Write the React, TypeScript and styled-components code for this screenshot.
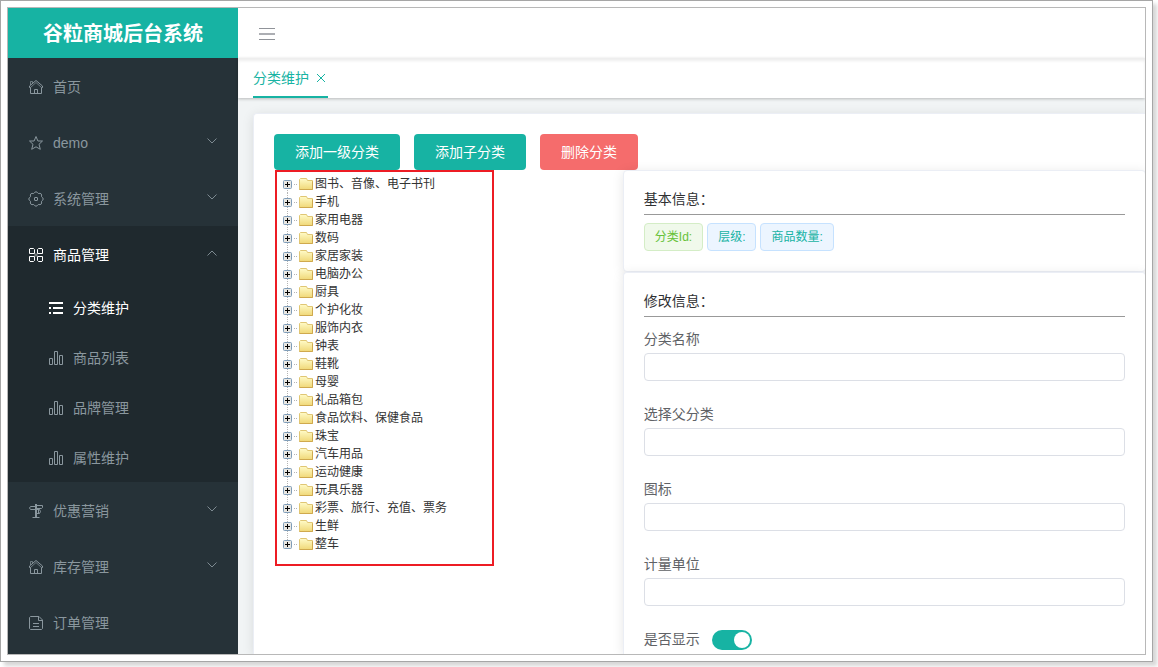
import React, { useState } from "react";
import styled, { createGlobalStyle, css } from "styled-components";

const brand = "#17b3a3";

const GlobalStyle = createGlobalStyle`
  * { box-sizing: border-box; }
  body {
    margin: 0;
    background: #fff;
    color: #303133;
    font-family: "Liberation Sans", "Noto Sans CJK SC", sans-serif;
    font-size: 14px;
    line-height: 20px;
  }
  button, input { font: inherit; }
  ul { list-style: none; margin: 0; padding: 0; }
`;

const Frame = styled.div`
  display: flex;
  min-height: calc(100vh - 5px);
  margin: 0 5px 5px 0;
  padding: 6px;
  border: 1px solid #a6a6a6;
  box-shadow: 4px 4px 4px rgba(0, 0, 0, 0.16);
`;

const Shell = styled.div`
  flex: 1;
  display: flex;
  min-width: 0;
  border: 1px solid #b8b8b8;
  overflow: hidden;
`;

const Sidebar = styled.aside`
  flex: 0 0 230px;
  background: #263238;
`;

const Brand = styled.h1`
  margin: 0;
  height: 50px;
  line-height: 52px;
  background: ${brand};
  color: #fff;
  font-size: 20px;
  font-weight: 700;
  text-align: center;
`;

const MenuGroup = styled.li<{ $open?: boolean }>`
  background: ${(p) => (p.$open ? "#1f292e" : "transparent")};
`;

const menuEntry = css<{ $active?: boolean }>`
  display: flex;
  align-items: center;
  width: 100%;
  border: 0;
  background: none;
  color: ${(p) => (p.$active ? "#fff" : "#8a979e")};
  text-align: left;
  text-decoration: none;
  cursor: pointer;
`;

const MenuButton = styled.button<{ $active?: boolean }>`
  ${menuEntry}
  height: 56px;
  padding: 2px 20px 0;
  gap: 9px;
`;

const SubLink = styled.a<{ $active?: boolean }>`
  ${menuEntry}
  height: 50px;
  padding: 2px 20px 0 40px;
  gap: 9px;
`;

const MenuLabel = styled.span`
  flex: 1;
`;

const Icon = styled.svg`
  flex: none;
  width: 16px;
  height: 16px;
  fill: none;
  stroke: currentColor;
  stroke-width: 1;
`;

const Arrow = styled.svg`
  flex: none;
  width: 12px;
  height: 10px;
  margin-bottom: 5px;
  fill: none;
  stroke: #7d8a91;
`;

const Main = styled.div`
  flex: 1;
  min-width: 0;
  display: flex;
  flex-direction: column;
  background: #f1f4f5;
`;

const Navbar = styled.header`
  display: flex;
  align-items: center;
  height: 50px;
  padding: 2px 20px 0;
  background: #fff;
`;

const IconButton = styled.button`
  display: flex;
  padding: 0;
  border: 0;
  background: none;
  color: #909399;
  cursor: pointer;
`;

const TabBar = styled.div`
  display: flex;
  height: 40px;
  padding: 0 15px;
  background: #fff;
  box-shadow: 0 1px 3px rgba(0, 0, 0, 0.24), inset 0 3px 3px rgba(0, 0, 0, 0.07);
`;

const Tab = styled.div`
  display: flex;
  align-items: center;
  gap: 5px;
  padding-top: 2px;
  border-bottom: 2px solid ${brand};
  color: ${brand};
`;

const TabLink = styled.a`
  color: inherit;
  text-decoration: none;
`;

const CloseButton = styled(IconButton)`
  color: ${brand};
`;

const Card = styled.section`
  border: 1px solid #ebeef5;
  border-radius: 4px;
  background: #fff;
  box-shadow: 0 2px 12px rgba(0, 0, 0, 0.1);
`;

const PageCard = styled(Card)`
  flex: 1;
  margin: 15px -1px 0 15px;
  padding: 20px 0 0 20px;
  border-width: 1px 0 0 1px;
  border-radius: 4px 0 0 0;
`;

const Toolbar = styled.div`
  display: flex;
  gap: 14px;
`;

const Button = styled.button<{ $danger?: boolean }>`
  height: 36px;
  padding: 0 21px;
  border: 0;
  border-radius: 4px;
  background: ${(p) => (p.$danger ? "#f56c6c" : brand)};
  color: #fff;
  cursor: pointer;
`;

const Columns = styled.div`
  display: grid;
  grid-template-columns: 2fr 3fr;
  align-items: start;
`;

const Tree = styled.ul`
  width: 219px;
  margin-left: 1px;
  padding: 3px 0 11px 5px;
  border: 2px solid #ed1c24;
  font-size: 12px;
`;

const TreeRow = styled.li`
  display: flex;
  align-items: center;
  height: 18px;
`;

const TreeToggle = styled.button`
  display: flex;
  padding: 0;
  border: 0;
  background: none;
`;

const TreeLink = styled.a`
  display: flex;
  align-items: center;
  line-height: 18px;
  color: #333;
  text-decoration: none;
`;

const InfoCard = styled(Card)`
  padding: 20px;
`;

const CardTitle = styled.h2`
  margin: 0;
  padding-bottom: 7px;
  border-bottom: 1px solid #999;
  font-size: 14px;
  font-weight: 400;
  line-height: 16px;
`;

const Tags = styled.div`
  display: flex;
  gap: 4px;
  margin-top: 8px;
`;

const Tag = styled.span<{ $success?: boolean }>`
  height: 28px;
  padding: 0 10px;
  border: 1px solid ${(p) => (p.$success ? "#d4edc6" : "#c6e2ff")};
  border-radius: 4px;
  background: ${(p) => (p.$success ? "#f0f9eb" : "#ecf5ff")};
  color: ${(p) => (p.$success ? "#67c23a" : brand)};
  font-size: 12px;
  line-height: 26px;
`;

const FormCard = styled(InfoCard)`
  padding-bottom: 4px;
  border-bottom: 0;
  border-radius: 4px 4px 0 0;
`;

const Form = styled.form`
  padding-top: 12px;
`;

const Field = styled.div`
  display: flex;
  flex-direction: column;
  gap: 4px;
  margin-bottom: 23px;
`;

const Label = styled.label`
  color: #606266;
`;

const TextInput = styled.input`
  width: 100%;
  height: 28px;
  padding: 0 15px;
  border: 1px solid #dcdfe6;
  border-radius: 4px;
  background: #fff;
  outline: none;
  &:focus { border-color: ${brand}; }
`;

const SwitchRow = styled.div`
  display: flex;
  align-items: flex-end;
  gap: 12px;
  height: 21px;

  ${Label} {
    align-self: flex-start;
  }
`;

const Switch = styled.input`
  appearance: none;
  display: flex;
  width: 40px;
  height: 20px;
  margin: 0;
  padding: 2px;
  border-radius: 10px;
  background: #dcdfe6;
  cursor: pointer;
  &::before {
    content: "";
    width: 16px;
    height: 16px;
    border-radius: 50%;
    background: #fff;
  }
  &:checked {
    justify-content: flex-end;
    background: ${brand};
  }
`;

const icons = {
  home: (
    <>
      <path d="M2.5 14.5V8.5H1.5V7L8 1.5L14.5 7V8.5H13.5V14.5z" />
      <path d="M2.5 6V2.5H4.5V4M2.5 8.5L8 3.5L13.5 8.5" strokeOpacity=".7" />
      <path d="M6.5 14.5V10.5H9.5V14.5" />
    </>
  ),
  star: <path d="M8 1.5L9.9 6H14.5L11 9.3L12.3 14.3L8 11.8L3.7 14.3L5 9.3L1.5 6H6.1z" />,
  gear: (
    <>
      <path d="M5.7 2.5Q8 -.9 10.3 2.5Q14.4 1.6 13.5 5.7Q16.9 8 13.5 10.3Q14.4 14.4 10.3 13.5Q8 16.9 5.7 13.5Q1.6 14.4 2.5 10.3Q-.9 8 2.5 5.7Q1.6 1.6 5.7 2.5z" />
      <rect x="6.5" y="6.5" width="3" height="3" rx=".5" />
    </>
  ),
  grid: (
    <>
      <path d="M2 1.5H5.5L6.5 2.5V6.5H1.5V2zM10.5 1.5H14L14.5 2V6.5H9.5V2.5zM1.5 9.5H6.5V13.5L5.5 14.5H2L1.5 14zM9.5 9.5H14.5V14L14 14.5H10.5L9.5 13.5z" />
      <path d="M8 6V10M6 8H10" strokeOpacity=".4" />
    </>
  ),
  list: <path d="M1 3H15M1 8H3M5 8H15M1 13H3M5 13H15" strokeWidth="2" />,
  bars: <path d="M1.5 8.5H4.5V14.5H1.5zM6.5 1.5H9.5V14.5H6.5zM11.5 5.5H14.5V14.5H11.5z" />,
  sign: (
    <>
      <path d="M7 3.5H2.5L1.5 5L2.5 6.5H7M9 2.5H14.5V4.5L13.5 5.5H9" />
      <path d="M9 6.5H11.5L12.5 8.5L11.5 10.5H9M10.5 6.5V10.5" />
      <path d="M8 1V14" strokeWidth="2" />
      <path d="M4.5 14.5H11.5" />
    </>
  ),
  doc: (
    <>
      <path d="M2.5 1.5H11L14.5 5V13.5L13.5 14.5H2.5L1.5 13.5V2.5z" />
      <path d="M10.5 1.5V5.5H14.5M5 8.5H11M5 11.5H11" />
    </>
  ),
};

type IconName = keyof typeof icons;

const MenuIcon = ({ name }: { name: IconName }) => (
  <Icon viewBox="0 0 16 16" aria-hidden="true">
    {icons[name]}
  </Icon>
);

const Chevron = ({ up }: { up?: boolean }) => (
  <Arrow viewBox="0 0 12 10" aria-hidden="true">
    <path d={up ? "M1.5 7.5L6 3L10.5 7.5" : "M1.5 2.5L6 7L10.5 2.5"} />
  </Arrow>
);

const PlusNode = ({ first, last }: { first: boolean; last: boolean }) => (
  <svg width="17" height="18" viewBox="0 0 17 18" aria-hidden="true">
    <path
      d={`M5.5 ${first ? 9 : 0}V${last ? 9 : 18}M12 9.5H15`}
      stroke="#b5b5b5"
      strokeDasharray="1 1"
      fill="none"
    />
    <rect x="1.5" y="5.5" width="8" height="8" rx="1" fill="#e9e7e2" stroke="#7f9db9" />
    <path d="M3 9.5H8M5.5 7V12" stroke="#000" />
  </svg>
);

const Folder = () => (
  <svg width="16" height="18" viewBox="0 0 16 18" aria-hidden="true">
    <defs>
      <linearGradient id="folder" x1="0" y1="0" x2="0" y2="1">
        <stop offset="0" stopColor="#fffbc8" />
        <stop offset="1" stopColor="#f0d878" />
      </linearGradient>
    </defs>
    <path d="M.5 4.5L1.5 3.5H7.5L8.5 5.5H13.5V14.5H.5z" fill="url(#folder)" stroke="#e0c674" />
    <path d="M.5 14.5H13.5V6.5" fill="none" stroke="#cfa94e" />
  </svg>
);

interface MenuItem {
  label: string;
  icon: IconName;
  arrow?: boolean;
  children?: { label: string; icon: IconName; active?: boolean }[];
}

const menu: MenuItem[] = [
  { label: "首页", icon: "home" },
  { label: "demo", icon: "star", arrow: true },
  { label: "系统管理", icon: "gear", arrow: true },
  {
    label: "商品管理",
    icon: "grid",
    arrow: true,
    children: [
      { label: "分类维护", icon: "list", active: true },
      { label: "商品列表", icon: "bars" },
      { label: "品牌管理", icon: "bars" },
      { label: "属性维护", icon: "bars" },
    ],
  },
  { label: "优惠营销", icon: "sign", arrow: true },
  { label: "库存管理", icon: "home", arrow: true },
  { label: "订单管理", icon: "doc" },
];

const categories = [
  "图书、音像、电子书刊", "手机", "家用电器", "数码", "家居家装", "电脑办公", "厨具",
  "个护化妆", "服饰内衣", "钟表", "鞋靴", "母婴", "礼品箱包", "食品饮料、保健食品",
  "珠宝", "汽车用品", "运动健康", "玩具乐器", "彩票、旅行、充值、票务", "生鲜", "整车",
];

const fields = [
  { id: "name", label: "分类名称" },
  { id: "parent", label: "选择父分类" },
  { id: "icon", label: "图标" },
  { id: "unit", label: "计量单位" },
];

export default function App() {
  const [visible, setVisible] = useState(true);
  return (
    <>
      <GlobalStyle />
      <Frame>
        <Shell>
          <Sidebar>
            <Brand>谷粒商城后台系统</Brand>
            <nav>
              <ul>
                {menu.map((item) => (
                  <MenuGroup key={item.label} $open={!!item.children}>
                    <MenuButton type="button" $active={!!item.children}>
                      <MenuIcon name={item.icon} />
                      <MenuLabel>{item.label}</MenuLabel>
                      {item.arrow && <Chevron up={!!item.children} />}
                    </MenuButton>
                    {item.children && (
                      <ul>
                        {item.children.map((child) => (
                          <li key={child.label}>
                            <SubLink href="#" $active={child.active}>
                              <MenuIcon name={child.icon} />
                              <MenuLabel>{child.label}</MenuLabel>
                            </SubLink>
                          </li>
                        ))}
                      </ul>
                    )}
                  </MenuGroup>
                ))}
              </ul>
            </nav>
          </Sidebar>
          <Main>
            <Navbar>
              <IconButton type="button" aria-label="菜单">
                <svg width="18" height="16" viewBox="0 0 18 16" fill="none" stroke="currentColor">
                  <path d="M1 2.5H17M1 13.5H17" />
                  <path d="M1 8H17" strokeWidth="2" strokeOpacity=".75" />
                </svg>
              </IconButton>
            </Navbar>
            <TabBar>
              <Tab>
                <TabLink href="#">分类维护</TabLink>
                <CloseButton type="button" aria-label="关闭">
                  <svg width="14" height="14" viewBox="0 0 14 14" fill="none" stroke="currentColor">
                    <path d="M3 3L11 11M11 3L3 11" />
                  </svg>
                </CloseButton>
              </Tab>
            </TabBar>
            <PageCard>
              <Toolbar>
                <Button type="button">添加一级分类</Button>
                <Button type="button">添加子分类</Button>
                <Button type="button" $danger>删除分类</Button>
              </Toolbar>
              <Columns>
                <Tree>
                  {categories.map((name, i) => (
                    <TreeRow key={name}>
                      <TreeToggle type="button" aria-label={`展开${name}`}>
                        <PlusNode first={i === 0} last={i === categories.length - 1} />
                      </TreeToggle>
                      <TreeLink href="#">
                        <Folder />
                        {name}
                      </TreeLink>
                    </TreeRow>
                  ))}
                </Tree>
                <div>
                  <InfoCard>
                    <CardTitle>基本信息：</CardTitle>
                    <Tags>
                      <Tag $success>分类Id:</Tag>
                      <Tag>层级:</Tag>
                      <Tag>商品数量:</Tag>
                    </Tags>
                  </InfoCard>
                  <FormCard>
                    <CardTitle>修改信息：</CardTitle>
                    <Form>
                      {fields.map((f) => (
                        <Field key={f.id}>
                          <Label htmlFor={f.id}>{f.label}</Label>
                          <TextInput id={f.id} type="text" />
                        </Field>
                      ))}
                      <SwitchRow>
                        <Label htmlFor="visible">是否显示</Label>
                        <Switch
                          id="visible"
                          type="checkbox"
                          role="switch"
                          checked={visible}
                          onChange={(e) => setVisible(e.target.checked)}
                        />
                      </SwitchRow>
                    </Form>
                  </FormCard>
                </div>
              </Columns>
            </PageCard>
          </Main>
        </Shell>
      </Frame>
    </>
  );
}
